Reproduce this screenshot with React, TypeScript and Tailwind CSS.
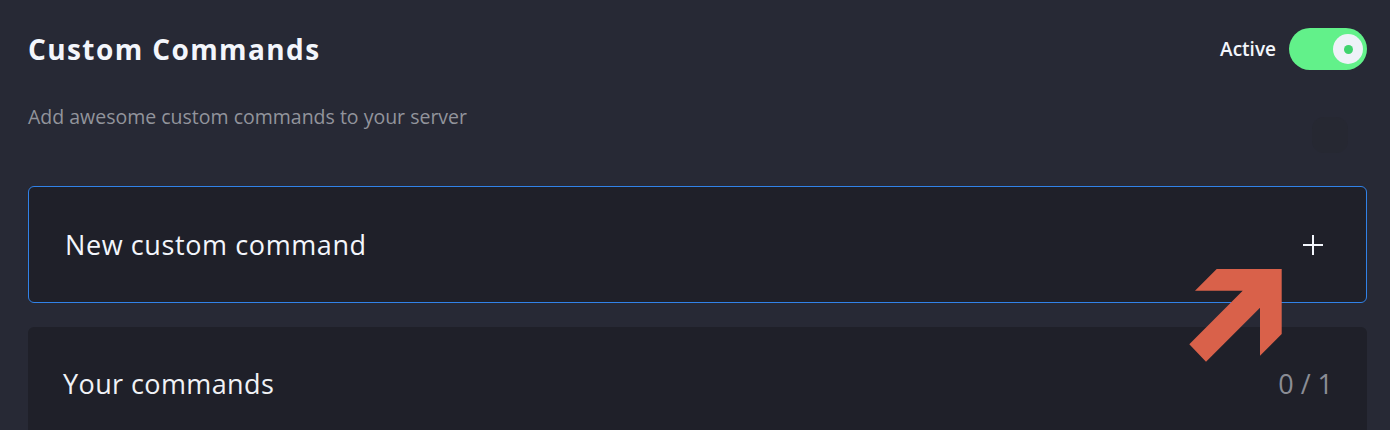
function Toggle() {
  return (
    <div className="flex h-[42px] w-[78px] items-center justify-end rounded-full bg-[#62f18a] pr-[4px]">
      <div className="flex h-[30px] w-[30px] items-center justify-center rounded-full bg-[#eef2f8]">
        <div className="h-[9px] w-[9px] rounded-full bg-[#3fd46e]" />
      </div>
    </div>
  );
}

function PlusIcon() {
  return (
    <svg width="20" height="20" viewBox="0 0 20 20" className="text-[#f3f6fc]">
      <path d="M10 0v20M0 10h20" stroke="currentColor" strokeWidth="2" />
    </svg>
  );
}

export default function App() {
  return (
    <div
      className="relative min-h-[430px] w-full overflow-hidden bg-[#272935] pl-[28px] pr-[23px] pt-[28px] text-white"
      style={{ fontFamily: '"Open Sans", "Noto Sans", sans-serif' }}
    >
      {/* Cabeçalho */}
      <div className="flex h-[42px] items-center justify-between">
        <h1 className="text-[28px] font-bold leading-[42px] tracking-[1.4px] text-[#f3f6fc]">Custom Commands</h1>
        <div className="flex items-center gap-[13px]">
          <span className="text-[19px] font-semibold text-[#f3f6fc]">Active</span>
          <Toggle />
        </div>
      </div>

      <div className="mt-[35px] flex items-start justify-between">
        <p className="text-[19.5px] leading-[24px] text-[#92949c]">Add awesome custom commands to your server</p>
        <div className="mr-[19px] mt-[12px] h-[36px] w-[36px] rounded-[12px] bg-[#262832]" />
      </div>

      {/* Novo comando */}
      <div className="mt-[33px] flex h-[117px] items-center justify-between rounded-[6px] border border-[#3182e8] bg-[#1f2029] pl-[36px] pr-[43px]">
        <span className="text-[27px] leading-[36px] tracking-[0.6px] text-[#f3f6fc]">New custom command</span>
        <PlusIcon />
      </div>

      {/* Lista */}
      <div className="mt-[24px] flex h-[120px] items-start justify-between rounded-[6px] bg-[#1f2029] pl-[35px] pr-[34px] pt-[39px]">
        <span className="text-[27px] leading-[36px] tracking-[0.4px] text-[#f0f2f6]">Your commands</span>
        <span className="text-[27px] leading-[36px] text-[#8b8d95]">0 / 1</span>
      </div>

      {/* Seta */}
      <svg
        className="pointer-events-none absolute left-0 top-0"
        width="1390"
        height="430"
        viewBox="0 0 1390 430"
      >
        <polygon
          points="1216.7,269 1195,290.7 1242.7,290.7 1189.3,344.3 1206,361.7 1260,307.7 1260,355.7 1281.7,334 1281.7,269"
          fill="#d9614a"
        />
      </svg>
    </div>
  );
}
